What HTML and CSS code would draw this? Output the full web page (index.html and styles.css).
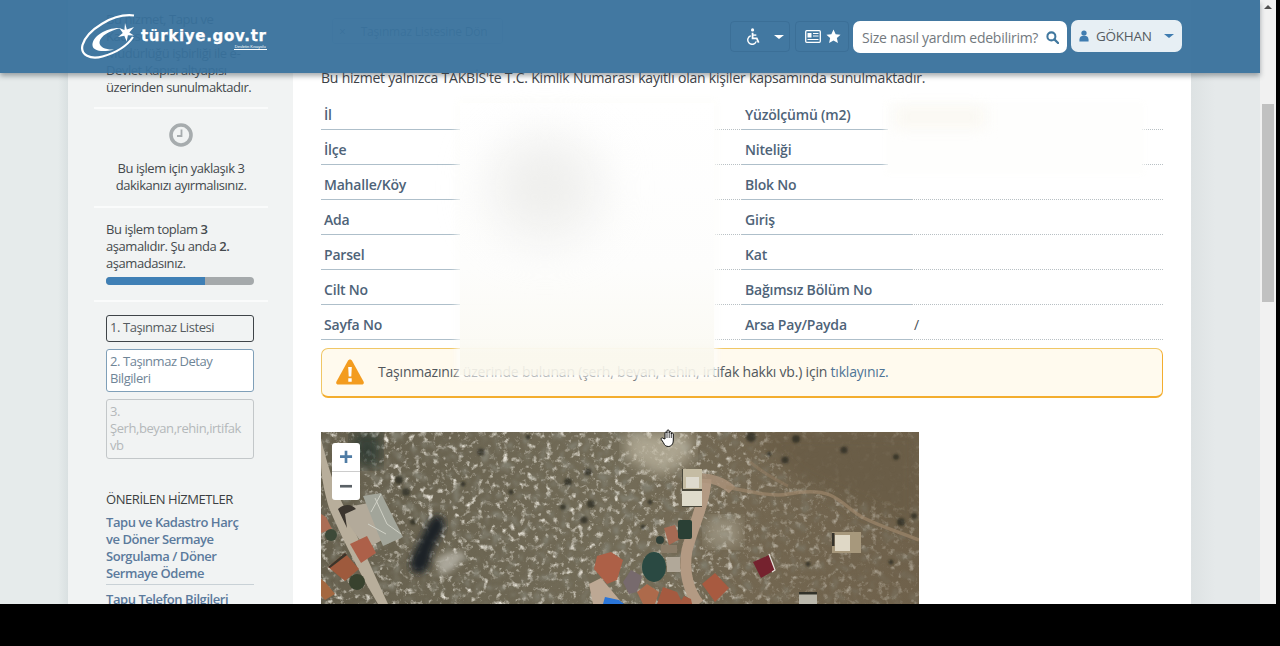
FILE: index.html
```html
<!DOCTYPE html>
<html lang="tr">
<head>
<meta charset="utf-8">
<title>Taşınmaz Detay Bilgileri</title>
<link rel="stylesheet" href="styles.css">
</head>
<body>
<div class="screen">
  <div class="page">
    <aside class="side">
      <p class="side-intro">Bu hizmet, Tapu ve Kadastro Genel Müdürlüğü işbirliği ile e-Devlet Kapısı altyapısı üzerinden sunulmaktadır.</p>
      <div class="side-time">
        <svg class="clock" viewBox="0 0 24 24" width="24" height="24"><circle cx="12" cy="12" r="10" fill="none" stroke="#a7acae" stroke-width="3.6"/><path d="M12.5 6.5v6.5H8" fill="none" stroke="#a7acae" stroke-width="1.8"/></svg>
        <p>Bu işlem için yaklaşık 3 dakikanızı ayırmalısınız.</p>
      </div>
      <div class="side-progress">
        <p>Bu işlem toplam <b>3</b> aşamalıdır. Şu anda <b>2.</b> aşamadasınız.</p>
        <div class="bar"><div class="bar-fill"></div></div>
      </div>
      <div class="steps">
        <div class="step step-done">1. Taşınmaz Listesi</div>
        <div class="step step-now">2. Taşınmaz Detay Bilgileri</div>
        <div class="step step-next">3. Şerh,beyan,rehin,irtifak vb</div>
      </div>
      <h4 class="rec-title">ÖNERİLEN HİZMETLER</h4>
      <a class="rec-link">Tapu ve Kadastro Harç ve Döner Sermaye Sorgulama / Döner Sermaye Ödeme</a>
      <a class="rec-link rec-last">Tapu Telefon Bilgileri</a>
    </aside>
    <main class="main">
      <div class="back"><span class="back-x">×</span><span>Taşınmaz Listesine Dön</span></div>
      <p class="lead">Bu hizmet yalnızca TAKBİS'te T.C. Kimlik Numarası kayıtlı olan kişiler kapsamında sunulmaktadır.</p>
      <div class="facts">
        <div class="fact"><span class="k">İl</span><span class="v"></span></div>
        <div class="fact"><span class="k">Yüzölçümü (m2)</span><span class="v"></span></div>
        <div class="fact"><span class="k">İlçe</span><span class="v"></span></div>
        <div class="fact"><span class="k">Niteliği</span><span class="v"></span></div>
        <div class="fact"><span class="k">Mahalle/Köy</span><span class="v"></span></div>
        <div class="fact"><span class="k">Blok No</span><span class="v"></span></div>
        <div class="fact"><span class="k">Ada</span><span class="v"></span></div>
        <div class="fact"><span class="k">Giriş</span><span class="v"></span></div>
        <div class="fact"><span class="k">Parsel</span><span class="v"></span></div>
        <div class="fact"><span class="k">Kat</span><span class="v"></span></div>
        <div class="fact"><span class="k">Cilt No</span><span class="v"></span></div>
        <div class="fact"><span class="k">Bağımsız Bölüm No</span><span class="v"></span></div>
        <div class="fact"><span class="k">Sayfa No</span><span class="v"></span></div>
        <div class="fact"><span class="k">Arsa Pay/Payda</span><span class="v">/</span></div>
      </div>
      <div class="alert">
        <svg class="alert-icon" viewBox="0 0 28 26" width="28" height="26"><path d="M14 .5c1 0 1.600.5 2.200 1.500l11.300 20.500c.8 1.600 0 3-1.700 3H2.200C.5 25.500-.3 24.100.5 22.500L11.800 2C12.400 1 13 .5 14 .5z" fill="#f39c1f"/><path d="M12.200 8h3.600l-.5 9.500h-2.600zM12.300 19.300h3.400v3.400h-3.400z" fill="#fff"/></svg>
        <span>Taşınmazınız üzerinde bulunan (şerh, beyan, rehin, irtifak hakkı vb.) için <a class="alert-link">tıklayınız.</a></span>
      </div>
      <div class="map">
        <svg class="map-art" viewBox="0 0 598 172" width="598" height="172" preserveAspectRatio="none">
          <defs>
            <filter id="rock" x="0" y="0" width="100%" height="100%">
              <feTurbulence type="fractalNoise" baseFrequency="0.16" numOctaves="4" seed="7"/>
              <feColorMatrix type="matrix" values="0 0 0 0 0.78  0 0 0 0 0.75  0 0 0 0 0.67  2.200 2.200 0 0 -2.300"/>
              <feGaussianBlur stdDeviation=".7"/>
            </filter>
            <filter id="dark" x="0" y="0" width="100%" height="100%">
              <feTurbulence type="fractalNoise" baseFrequency="0.1" numOctaves="3" seed="23"/>
              <feColorMatrix type="matrix" values="0 0 0 0 0.22  0 0 0 0 0.21  0 0 0 0 0.16  0 2.400 2.400 0 -2.500"/>
              <feGaussianBlur stdDeviation=".8"/>
            </filter>
            <filter id="soft"><feGaussianBlur stdDeviation="7"/></filter>
            <filter id="soft2"><feGaussianBlur stdDeviation="3"/></filter>
            <filter id="soft3"><feGaussianBlur stdDeviation=".7"/></filter>
            <filter id="soft4"><feGaussianBlur stdDeviation="1.200"/></filter>
            <linearGradient id="land" x1="0" x2="1" y1="0" y2="0">
              <stop offset="0" stop-color="#66604e"/><stop offset=".5" stop-color="#736c58"/><stop offset=".72" stop-color="#736751"/><stop offset="1" stop-color="#6f614b"/>
            </linearGradient>
            <linearGradient id="rockmask" x1="0" x2="1" y1="0" y2="0">
              <stop offset="0" stop-color="#fff"/><stop offset=".62" stop-color="#fff"/><stop offset=".72" stop-color="#999"/><stop offset="1" stop-color="#666"/>
            </linearGradient>
            <mask id="rockfade"><rect width="598" height="172" fill="url(#rockmask)"/><path d="M440 0h158v85L480 50z" fill="#111" filter="url(#soft)"/></mask>
          </defs>
          <rect width="598" height="172" fill="url(#land)"/>
          <path d="M425 0h173v100L480 50z" fill="#6b5d46" filter="url(#soft)"/>
          <rect width="598" height="172" filter="url(#rock)" mask="url(#rockfade)"/>
          <rect width="598" height="172" filter="url(#dark)" mask="url(#rockfade)"/>
          <path d="M305 0h65v28l-30 16-35-18z" fill="#c4bda8" opacity=".7" filter="url(#soft)"/>
          <path d="M385 85h35v30h-35z" fill="#b0aa98" opacity=".6" filter="url(#soft)"/>
          <path d="M30 0h30v35H35z" fill="#28352f" opacity=".8" filter="url(#soft)"/>
          <path d="M112 85c10-4 14 4 10 14-4 8-10 14-12 26-2 10-6 18-14 16-8-2-8-10-4-18 6-12 12-28 20-38z" fill="#1a2028" filter="url(#soft2)"/>
          <path d="M114 128c10-8 22-12 30-6-4 10-14 18-24 22z" fill="#b9b6aa" opacity=".8" filter="url(#soft2)"/>
          <g fill="#2c2b20" opacity=".75" filter="url(#soft4)">
            <circle cx="160" cy="20" r="3.500"/><circle cx="207" cy="5" r="2.500"/><circle cx="247" cy="50" r="4"/><circle cx="190" cy="60" r="2.500"/><circle cx="242" cy="75" r="3"/><circle cx="270" cy="72" r="4"/><circle cx="263" cy="88" r="3.500"/><circle cx="267" cy="40" r="3.500"/><circle cx="85" cy="60" r="4"/><circle cx="92" cy="90" r="3"/><circle cx="78" cy="48" r="4"/><circle cx="142" cy="52" r="2.500"/><circle cx="475" cy="7" r="4"/><circle cx="523" cy="18" r="3.500"/><circle cx="464" cy="28" r="3.500"/><circle cx="448" cy="22" r="2.500"/><circle cx="575" cy="25" r="3"/><circle cx="580" cy="90" r="4"/><circle cx="593" cy="84" r="3"/><circle cx="430" cy="5" r="5"/><circle cx="570" cy="130" r="2.500"/><circle cx="487" cy="132" r="2.500"/><circle cx="329" cy="70" r="2.500"/><circle cx="322" cy="95" r="2.500"/>
          </g>
          <g filter="url(#soft3)">
            <path d="M0 7c6 25 14 50 24 70 14 32 30 66 43 95H57C38 140 20 104 8 76 4 62 0 45 0 30z" fill="#b8ae9b"/>
            <path d="M17 77l30-6 16 36-18 10z" fill="#b3aa9a"/>
            <path d="M42 64l18-3 22 44-20 9z" fill="#a2a59a"/>
            <path d="M54 66l12 26 14 10M47 92l18 10M60 62L50 80" stroke="#d0d1c6" stroke-width="1" fill="none"/>
            <path d="M17 77C26 70 32 74 35 77L24 82l2 14z" fill="#3a352d"/>
            <path d="M29 112l17-8 9 17-15 10z" fill="#ad6049"/>
            <path d="M7 135l17-14 14 16-14 12z" fill="#9e5a3c"/>
            <path d="M7 135l17-14 2 2-17 13z" fill="#3a352c"/>
            <path d="M0 82l5 3 6 12-11 4z" fill="#ab6d54"/>
            <path d="M0 147l5 4 9 11-10 6-4-4z" fill="#a46741"/>
            <circle cx="10" cy="103" r="6" fill="#3e4a38"/>
            <circle cx="36" cy="150" r="8" fill="#39432f"/>
            <path d="M272 172l-4-20 12-6 22 26z" fill="#bda894"/>
            <path d="M385 47C384 70 372 95 366 118 362 140 368 160 378 172" stroke="#b39a83" stroke-width="11" fill="none"/>
            <path d="M381 46c10 0 22 4 30 12" stroke="#ad947c" stroke-width="9" fill="none" opacity=".8"/>
            <path d="M405 55c30 6 50 10 62 7 16-3 32-3 42 1 14 6 22 18 36 24 16 8 36 14 53 21" stroke="#9c866b" stroke-width="3.500" fill="none" opacity=".7"/>
            <path d="M429 30c12 10 22 16 38 24" stroke="#8f7c60" stroke-width="3" fill="none" opacity=".6"/>
            <rect x="361" y="37" width="20" height="38" fill="#4a463a"/>
            <rect x="362" y="37" width="19" height="20" fill="#c5bca3"/><rect x="365" y="45" width="13" height="11" fill="#dedace"/>
            <rect x="361" y="59" width="20" height="15" fill="#dfdbcb"/>
            <rect x="511" y="100" width="29" height="21" fill="#a7987b"/><rect x="511" y="101" width="2.500" height="13" fill="#34302a"/><rect x="514" y="103" width="15" height="16" fill="#dfd8c6"/>
            <path d="M343 96l11-3 5 14-11 6z" fill="#a66a52"/>
            <rect x="357" y="88" width="14" height="19" rx="2" fill="#2b4134"/>
            <path d="M432 130l16-7 6 15-14 8z" fill="#74232f"/><path d="M448 122l6 16-3 2" stroke="#e6e2dc" fill="none" stroke-width="1.200"/>
            <path d="M381 152l13-11 14 15-14 14z" fill="#a85a40"/>
            <path d="M302 150l8-12 11 6-5 16-8 2z" fill="#776a6d"/>
            <path d="M316 160l10-8 12 8-4 12h-12z" fill="#ad6a4c"/>
            <path d="M336 172l6-17 14 5 6 12z" fill="#a55a41"/>
            <path d="M358 172l5-8 7 3 1 5z" fill="#a55a41"/>
            <rect x="346" y="125" width="13" height="15" fill="#b1a899"/>
            <rect x="340" y="113" width="16" height="8" fill="#8a7c68"/>
            <ellipse cx="333" cy="135" rx="12" ry="15" fill="#2a4a42"/>
            <circle cx="339" cy="108" r="4" fill="#2f4038"/>
            <rect x="478" y="162" width="18" height="10" fill="#bab7ab"/><rect x="478" y="160" width="18" height="2.500" fill="#33322c"/>
            <path d="M276 124l14-4 12 8-6 20-10 4-13-15z" fill="#ad6047"/>
            <path d="M282 172l2-7 14 3 5 4z" fill="#2a74d8"/>
          </g>
        </svg>
        <div class="zoom-ctl"><span class="zoom-btn zoom-plus">+</span><span class="zoom-btn">−</span></div>
      </div>
    </main>
  </div>
  <div class="scrollbar">
    <span class="sb-up"></span>
    <span class="sb-thumb"></span>
  </div>
  <div class="blur blur-a"></div>
  <div class="blur blur-a-core"></div>
  <div class="blur blur-b"></div>
  <div class="blur blur-b-warm"></div>
  <svg class="hand" viewBox="0 0 18 20" width="18" height="20"><path d="M5 11V5c0-1.400 2-1.400 2 0V3c0-1.500 2.200-1.500 2.200 0v1.500c0-1.300 2.100-1.300 2.100 0V6c0-1.200 2-1.200 2 0v6c0 3-1 6-4.500 6.500-3 0-4-1-5.500-4L1.300 11.500c-.7-1.200.8-2.300 1.800-1.200z" fill="#fff" stroke="#111" stroke-width="1" stroke-linejoin="round"/><path d="M7 5v5M9.200 4v6M11.300 5v5" stroke="#111" stroke-width=".8"/></svg>
  <header class="top">
    <div class="logo">
      <svg class="logo-mark" viewBox="0 0 58 46" width="58" height="46"><path d="M53 1.500C32-1 6 16 1.500 31c-2.500 10 8 15 20 11.500C34 39 46 32 52 23" fill="none" stroke="#fff" stroke-width="2.200"/><path d="M40 14C26 13 11 22 11.500 31.500c.5 5.500 10 7 21.500 4-7.500.5-15-2-14.500-7.500 1-6 10-11.500 21.500-14z" fill="#fff"/><path d="M44 9l1.900 6.600 7.100-2.600-4.700 5.400 4.700 3.100-6.100-.2-1.200 6.100-2.400-5.600-6.300 1.300 4.800-4-3.500-5.100 5.100 2.100z" fill="#fff"/></svg>
      <div class="logo-text"><span class="logo-name">türkiye.gov.tr</span><span class="logo-tag">Devletin Kısayolu</span></div>
    </div>
    <div class="tools">
      <div class="tool tool-a">
        <svg viewBox="0 0 16 18" width="15" height="17"><circle cx="7" cy="2" r="1.700" fill="#fff"/><path d="M7 5v6h4.500l2 4.500" fill="none" stroke="#fff" stroke-width="1.900"/><path d="M5 8.200a4.700 4.700 0 1 0 6 6" fill="none" stroke="#fff" stroke-width="1.500"/><path d="M7 7.500h4" stroke="#fff" stroke-width="1.500"/></svg>
        <span class="caret caret-w"></span>
      </div>
      <div class="tool tool-b">
        <svg viewBox="0 0 16 13" width="16" height="13"><rect x=".7" y=".7" width="14.600" height="11.600" rx="1" fill="none" stroke="#fff" stroke-width="1.300"/><rect x="2.500" y="3" width="4" height="4.500" fill="#fff"/><path d="M8 3.500H13.500M8 6H13.500M2.500 9.500H13.500" stroke="#fff" stroke-width="1.100"/></svg>
        <svg viewBox="0 0 16 16" width="15" height="15"><path d="M8 .5l2.300 5 5.200.6-3.900 3.500 1.100 5.300L8 12.200 3.300 14.900l1.100-5.300L.5 6.100l5.200-.6z" fill="#fff"/></svg>
      </div>
      <div class="search">
        <span class="search-text">Size nasıl yardım edebilirim?</span>
        <svg viewBox="0 0 14 14" width="13" height="13"><circle cx="5.800" cy="5.800" r="4.300" fill="none" stroke="#41789f" stroke-width="2.200"/><path d="M9 9l4 4" stroke="#41789f" stroke-width="2.400" stroke-linecap="round"/></svg>
      </div>
      <div class="user">
        <svg viewBox="0 0 12 14" width="10" height="12"><circle cx="6" cy="3.500" r="3.200" fill="#3f7cb0"/><path d="M.5 13.500c-.3-4 1-6.500 3-6.500h5c2 0 3.300 2.500 3 6.500z" fill="#3f7cb0"/></svg>
        <span class="user-name">GÖKHAN</span>
        <span class="caret caret-b"></span>
      </div>
    </div>
  </header>
</div>
</body>
</html>
```
FILE: styles.css
```css
* { box-sizing: border-box; }
html, body { margin: 0; height: 646px; overflow: hidden; background: #000; }
body { font-family: "Open Sans", "Noto Sans", sans-serif; font-size: 13px; color: #3a3f44; }
p, h4 { margin: 0; }

.screen { position: relative; display: flex; width: 1276px; height: 604px; overflow: hidden; }
.page {
  display: flex; width: 1260px; height: 604px; padding: 0 69px 0 68px;
  background: linear-gradient(90deg, #e6ebeb 0, #e6ebeb 58px, #d9e0e1 68px, #e6e9ea 68px, #dde2e3 1191px, #e5e9ea 1215px, #e5e9ea 100%);
}

.side { width: 225px; flex: none; padding: 11px 25px 0 26px; background: #f1f3f3; letter-spacing: -.44px; line-height: 17px; color: #44494d; }
.side-intro { height: 98px; padding: 0 12px; border-bottom: 2px solid #fafbfb; }
.side-time { display: flex; flex-direction: column; align-items: center; height: 99px; padding: 14px 0 0; border-bottom: 2px solid #fafbfb; text-align: center; }
.side-time p { width: 148px; margin-top: 13px; }
.clock { flex: none; }
.side-progress { height: 94px; padding: 13px 14px 0 12px; border-bottom: 2px solid #fafbfb; }
.side-progress b { font-weight: 600; }
.bar { height: 8px; margin-top: 5px; border-radius: 4px; overflow: hidden; background: #a5a9ab; }
.bar-fill { width: 67%; height: 100%; background: #3f7fb5; }
.steps { display: flex; flex-direction: column; gap: 7px; margin: 13px 14px 0 12px; }
.step { padding: 3px; border: 1px solid; border-radius: 3px; }
.step-done { height: 27px; border-color: #3f4448; color: #555b60; }
.step-now { height: 43px; border-color: #7f9fb8; background: #fff; color: #6f8597; }
.step-next { height: 60px; border-color: #c3c7c9; color: #b4b8ba; }
.rec-title { margin: 32px 14px 0 12px; font-size: 13px; font-weight: 400; color: #3b3f42; }
.rec-link { display: block; margin: 6px 14px 0 12px; padding-bottom: 2px; border-bottom: 1px solid #c9d1d6; font-weight: 600; color: #5b7a9c; }
.rec-last { margin-top: 6px; border-bottom: 0; }

.main { width: 898px; flex: none; padding: 18px 28px 0; background: #fff; }
.back { display: flex; align-items: center; gap: 15px; width: 171px; height: 26px; margin-left: 11px; padding: 0 6px; border: 1px solid #d5dbdf; border-radius: 3px; font-size: 12px; letter-spacing: -.2px; color: #6b7c8a; white-space: nowrap; }
.lead { margin-top: 24px; font-size: 14px; line-height: 20px; letter-spacing: -.21px; color: #3c4146; white-space: nowrap; }
.facts { display: grid; grid-template-columns: 421px 421px; margin-top: 7px; }
.fact { display: grid; grid-template-columns: 169px 252px; height: 35px; }
.k { padding: 6px 0 0 3px; border-bottom: 1px solid #aebfca; font-size: 14px; font-weight: 600; line-height: 27px; letter-spacing: -.2px; color: #4e6378; }
.v { padding: 6px 0 0 3px; border-bottom: 1px dotted #b8c0c4; font-size: 14px; line-height: 27px; color: #4a5056; }
.alert { display: flex; align-items: center; gap: 14px; width: 842px; height: 50px; margin-top: 8px; padding: 0 15px 2px 14px; border: 1px solid #f0c766; border-bottom: 2px solid #f3ad2e; border-right-color: #f3ad2e; border-radius: 7px; background: #fffaee; font-size: 14px; letter-spacing: -.2px; color: #51575c; white-space: nowrap; }
.alert-icon { flex: none; }
.alert-link { color: #4f7596; }
.map { position: relative; width: 598px; height: 172px; margin-top: 34px; overflow: hidden; background: #736c58; }
.map-art { display: block; }
.zoom-ctl { position: absolute; left: 11px; top: 11px; display: flex; flex-direction: column; width: 28px; border-radius: 3px; overflow: hidden; background: #fff; }
.zoom-btn { display: flex; align-items: center; justify-content: center; height: 28.500px; font-family: "Liberation Sans", sans-serif; font-size: 24px; font-weight: 700; color: #4f7ca5; }
.zoom-plus { border-bottom: 1px solid #ccc; }
.zoom-btn:last-child { color: #5a6166; }

.scrollbar { position: relative; width: 16px; height: 604px; flex: none; background: #f1f1f1; }
.sb-up { position: absolute; left: 4px; top: 5px; border: 4px solid transparent; border-top: 0; border-bottom: 4px solid #505050; }
.sb-thumb { position: absolute; left: 2px; top: 104px; width: 12px; height: 198px; background: #c1c1c1; }

.blur { position: absolute; }
.blur-a { left: 460px; top: 103px; width: 254px; height: 272px; background: linear-gradient(180deg, #fff 0, #fdfdfc 60%, rgba(251, 250, 244, .98) 88%, rgba(250, 248, 238, .95) 92%, rgba(250, 248, 238, .9) 100%); box-shadow: 0 0 6px 4px rgba(253, 253, 251, .75); }
.blur-a-core { left: 490px; top: 135px; width: 110px; height: 105px; border-radius: 50%; background: #efefed; filter: blur(24px); }
.blur-b { left: 888px; top: 104px; width: 254px; height: 68px; background: #fefefd; box-shadow: 0 0 5px 3px rgba(254, 254, 253, .8); }
.blur-b-warm { left: 895px; top: 106px; width: 90px; height: 22px; background: #faf8f2; filter: blur(7px); }
.hand { position: absolute; left: 660px; top: 428px; }

.top {
  position: absolute; left: 0; top: 0; display: flex; align-items: flex-start; justify-content: space-between;
  width: 1260px; height: 73px; padding: 20px 78px 0 81px;
  background: rgba(56, 113, 156, .95); box-shadow: 0 3px 5px rgba(60, 70, 80, .45);
}
.logo { display: flex; align-items: flex-start; margin-top: -6px; }
.logo-mark { flex: none; }
.logo-text { display: flex; flex-direction: column; align-items: flex-end; margin: 14px 0 0 2px; color: #fff; }
.logo-name { font-family: "DejaVu Sans", sans-serif; font-size: 15px; font-weight: 700; line-height: 16px; letter-spacing: .7px; white-space: nowrap; -webkit-text-stroke: .25px #fff; }
.logo-tag { padding: 0 1px; border-bottom: 1px solid #fff; font-family: "Liberation Sans", sans-serif; font-size: 4px; line-height: 5px; white-space: nowrap; }
.tools { display: flex; align-items: flex-start; }
.tool { display: flex; align-items: center; height: 31px; margin-top: 1px; border: 1px solid rgba(50, 100, 140, .45); border-radius: 4px; }
.tool-a { width: 60px; gap: 13px; padding-left: 15px; }
.tool-b { width: 54px; gap: 5px; margin-left: 5px; padding-left: 9px; }
.caret { border: 5px solid transparent; border-bottom: 0; border-top-width: 4.500px; }
.caret-w { border-top-color: #fff; }
.caret-b { border-top-color: #3f7cb0; }
.search { display: flex; align-items: center; justify-content: space-between; width: 214px; height: 32px; margin: 1px 0 0 4px; padding: 0 8px 0 9px; border-radius: 7px; background: #fff; color: #73797e; font-size: 14px; letter-spacing: -.27px; white-space: nowrap; }
.user { display: flex; align-items: center; width: 111px; height: 32px; margin-left: 4px; padding-left: 8px; border-radius: 7px; background: #e7eff4; color: #555c62; font-size: 13.500px; letter-spacing: -.25px; }
.user-name { margin: 0 12px 0 7px; }
```
